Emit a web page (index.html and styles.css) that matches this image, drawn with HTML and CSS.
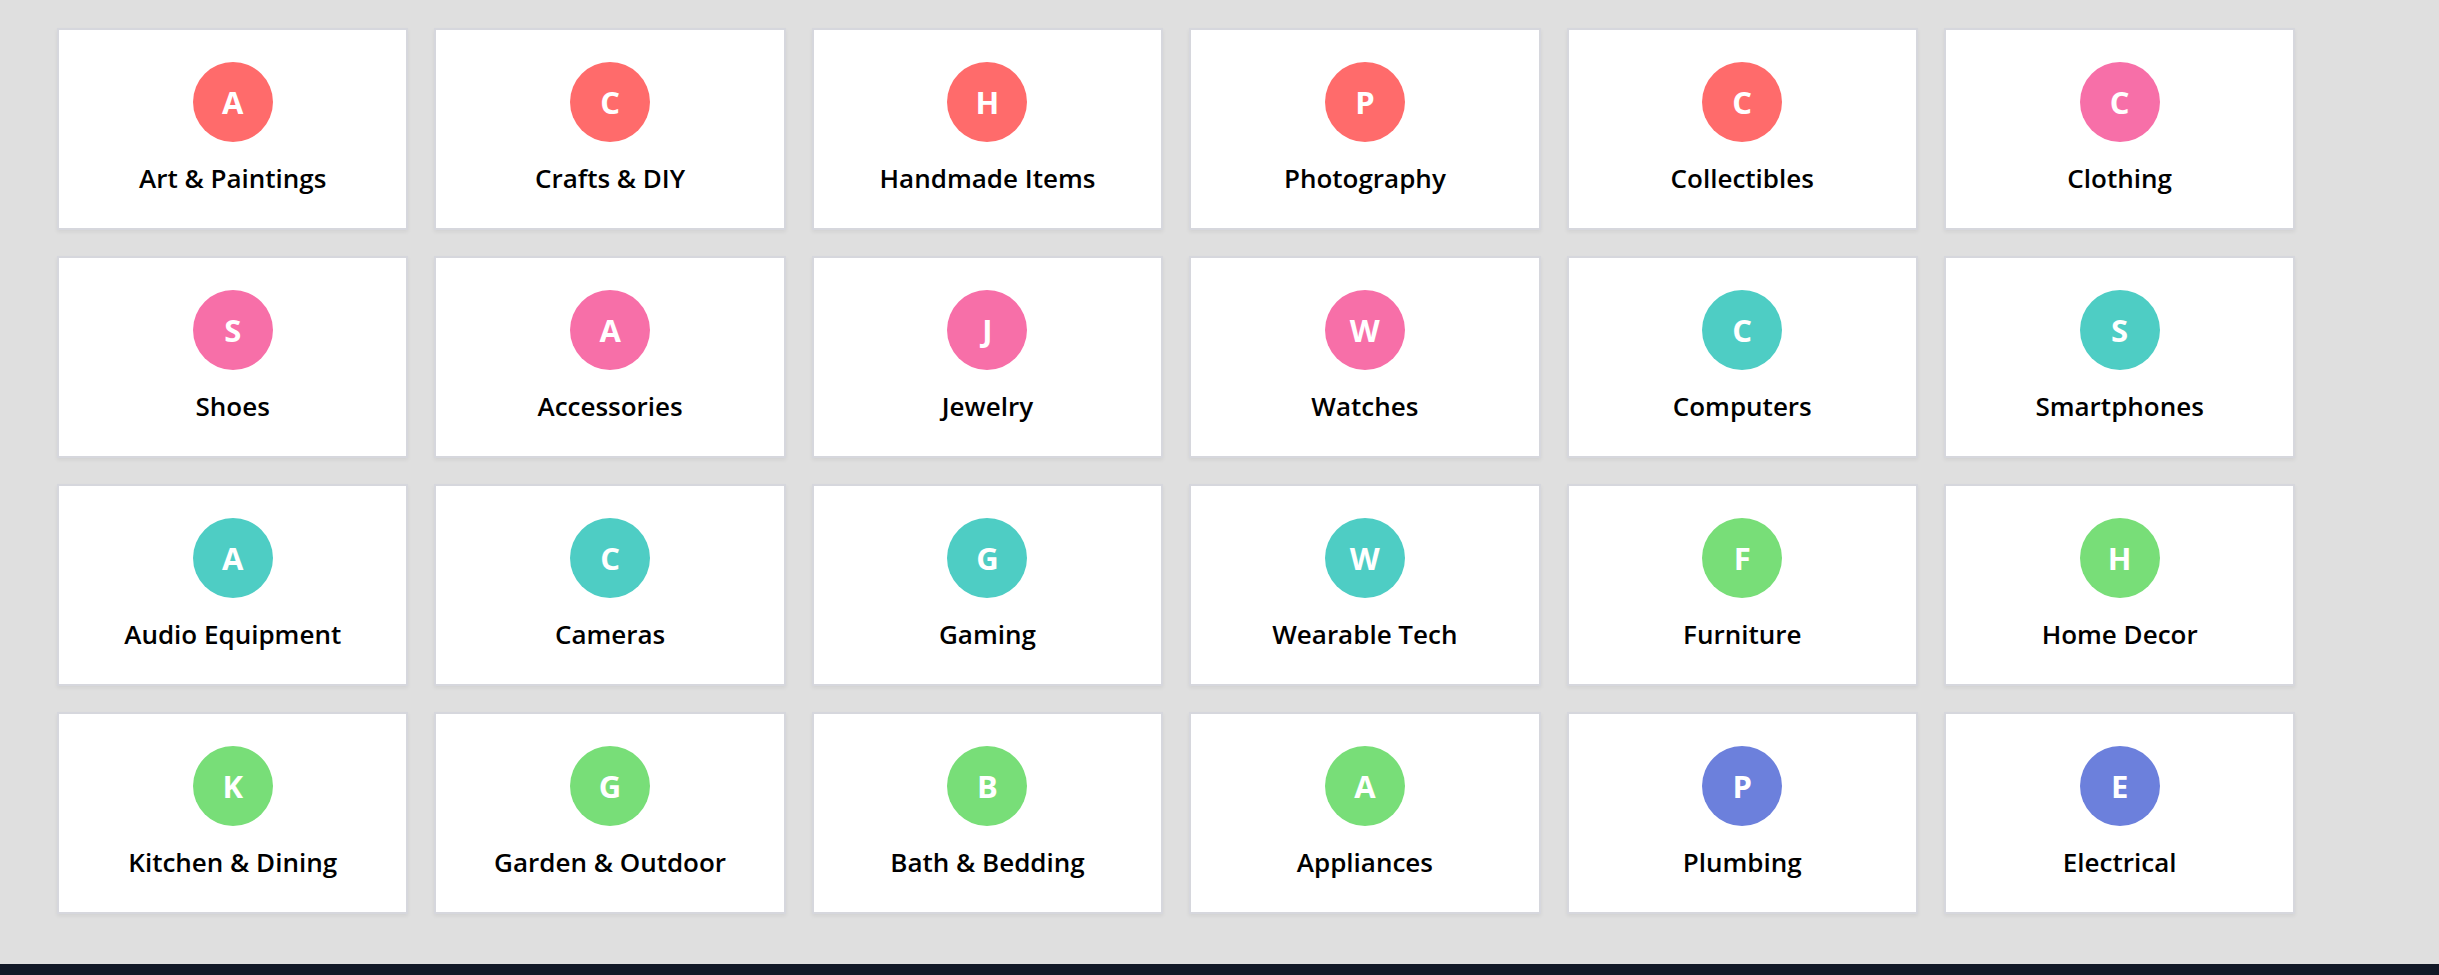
FILE: index.html
```html
<!DOCTYPE html>
<html lang="en">
<head>
<meta charset="utf-8">
<title>Categories</title>
<link rel="stylesheet" href="styles.css">
</head>
<body>
<main class="page">
  <section class="grid">
    <div class="card"><div class="avatar red">A</div><div class="label">Art &amp; Paintings</div></div>
    <div class="card"><div class="avatar red">C</div><div class="label">Crafts &amp; DIY</div></div>
    <div class="card"><div class="avatar red">H</div><div class="label">Handmade Items</div></div>
    <div class="card"><div class="avatar red">P</div><div class="label">Photography</div></div>
    <div class="card"><div class="avatar red">C</div><div class="label">Collectibles</div></div>
    <div class="card"><div class="avatar pink">C</div><div class="label">Clothing</div></div>

    <div class="card"><div class="avatar pink">S</div><div class="label">Shoes</div></div>
    <div class="card"><div class="avatar pink">A</div><div class="label">Accessories</div></div>
    <div class="card"><div class="avatar pink">J</div><div class="label">Jewelry</div></div>
    <div class="card"><div class="avatar pink">W</div><div class="label">Watches</div></div>
    <div class="card"><div class="avatar teal">C</div><div class="label">Computers</div></div>
    <div class="card"><div class="avatar teal">S</div><div class="label">Smartphones</div></div>

    <div class="card"><div class="avatar teal">A</div><div class="label">Audio Equipment</div></div>
    <div class="card"><div class="avatar teal">C</div><div class="label">Cameras</div></div>
    <div class="card"><div class="avatar teal">G</div><div class="label">Gaming</div></div>
    <div class="card"><div class="avatar teal">W</div><div class="label">Wearable Tech</div></div>
    <div class="card"><div class="avatar green">F</div><div class="label">Furniture</div></div>
    <div class="card"><div class="avatar green">H</div><div class="label">Home Decor</div></div>

    <div class="card"><div class="avatar green">K</div><div class="label">Kitchen &amp; Dining</div></div>
    <div class="card"><div class="avatar green">G</div><div class="label">Garden &amp; Outdoor</div></div>
    <div class="card"><div class="avatar green">B</div><div class="label">Bath &amp; Bedding</div></div>
    <div class="card"><div class="avatar green">A</div><div class="label">Appliances</div></div>
    <div class="card"><div class="avatar blue">P</div><div class="label">Plumbing</div></div>
    <div class="card"><div class="avatar blue">E</div><div class="label">Electrical</div></div>
  </section>
</main>
<footer class="footer"></footer>
</body>
</html>
```

FILE: styles.css
```css
* { box-sizing: border-box; }

html, body {
  margin: 0;
  padding: 0;
  background: #dfdfdf;
  font-family: "Open Sans", "Noto Sans", "Liberation Sans", sans-serif;
}

.page {
  padding: 28px 0 50px 57px;
}

.grid {
  display: grid;
  grid-template-columns: repeat(6, 351.4px);
  gap: 26px;
}

.card {
  background: #ffffff;
  border: 2px solid #d6d7dd;
  box-shadow: 0 2px 4px rgba(0, 0, 0, 0.06);
  height: 202px;
  padding: 32px 0 0;
  display: flex;
  flex-direction: column;
  align-items: center;
}

.avatar {
  width: 80px;
  height: 80px;
  border-radius: 50%;
  color: #ffffff;
  font-weight: 700;
  font-size: 31px;
  line-height: 80px;
  text-align: center;
}

.red { background: #ff6b6b; }
.pink { background: #f76fa8; }
.teal { background: #4ecdc4; }
.green { background: #78de78; }
.blue { background: #6c80dc; }

.label {
  margin-top: 18px;
  font-size: 26px;
  font-weight: 600;
  line-height: 36px;
  color: #000000;
}

.footer {
  background: #111827;
  height: 40px;
}
```
